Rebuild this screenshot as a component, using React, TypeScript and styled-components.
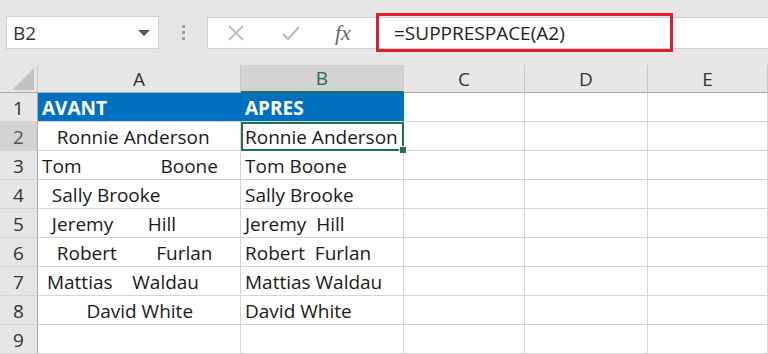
import React from 'react';
import styled, {createGlobalStyle} from 'styled-components';

const GlobalStyle = createGlobalStyle`
  html, body {
    margin: 0;
    padding: 0;
    background: #ffffff;
  }
  body {
    font-family: "Open Sans", "Noto Sans", sans-serif;
    overflow: hidden;
  }
`

const columns = ['A', 'B', 'C', 'D', 'E'];
const colWidths = [203, 163, 121, 123, 120];

const rows: string[][] = [
  ['AVANT', 'APRES'],
  ['   Ronnie Anderson', 'Ronnie Anderson'],
  ['Tom                Boone', 'Tom Boone'],
  ['  Sally Brooke', 'Sally Brooke'],
  ['  Jeremy       Hill', 'Jeremy  Hill'],
  ['   Robert        Furlan', 'Robert  Furlan'],
  [' Mattias    Waldau', 'Mattias Waldau'],
  ['         David White', 'David White'],
  ['', ''],
];

const App: React.FC = () => {
  return (
    <>
      <GlobalStyle/>
      <Page>
        <Toolbar>
          <NameBox>
            <NameText>B2</NameText>
            <DropArrow/>
          </NameBox>
          <Grip>
            <Dot/>
            <Dot/>
            <Dot/>
          </Grip>
          <FormulaBox>
            <IconSlot>
              <svg width="18" height="18" viewBox="0 0 18 18">
                <path d="M2 2 L16 16 M16 2 L2 16" stroke="#bdbdbd" strokeWidth="1.8" fill="none"/>
              </svg>
            </IconSlot>
            <IconSlot>
              <svg width="20" height="18" viewBox="0 0 20 18">
                <path d="M2 10 L7 15 L18 3" stroke="#bdbdbd" strokeWidth="2.2" fill="none"/>
              </svg>
            </IconSlot>
            <FxLabel>fx</FxLabel>
            <FormulaInput>=SUPPRESPACE(A2)</FormulaInput>
          </FormulaBox>
        </Toolbar>

        <Sheet>
          <Corner>
            <CornerTriangle/>
          </Corner>
          {columns.map((c) => (
            <ColHeader key={c} $selected={c === 'B'}>{c}</ColHeader>
          ))}
          <ColFiller/>

          {rows.map((r, ri) => (
            <React.Fragment key={ri}>
              <RowHeader $selected={ri === 1}>{ri + 1}</RowHeader>
              {columns.map((c, ci) => (
                <Cell
                  key={c}
                  $head={ri === 0 && ci < 2}
                  $active={ri === 1 && ci === 1}
                >
                  {r[ci] ?? ''}
                  {ri === 1 && ci === 1 && <FillHandle/>}
                </Cell>
              ))}
              <Cell $head={false} $active={false}/>
            </React.Fragment>
          ))}
        </Sheet>
      </Page>
    </>
  );
};

const Page = styled.div`
  width: 768px;
  height: 354px;
  overflow: hidden;
  background: #ffffff;
`

const Toolbar = styled.div`
  height: 65px;
  background: #e6e6e6;
  display: flex;
  align-items: center;
  padding-left: 6px;
  box-sizing: border-box;
`

const NameBox = styled.div`
  width: 153px;
  height: 33px;
  background: #ffffff;
  border: 1px solid #d0d0d0;
  box-sizing: border-box;
  display: flex;
  align-items: center;
  justify-content: space-between;
  padding: 0 8px 0 6px;
`

const NameText = styled.span`
  font-size: 19px;
  color: #333;
`

const DropArrow = styled.span`
  width: 0;
  height: 0;
  border-left: 6px solid transparent;
  border-right: 6px solid transparent;
  border-top: 6px solid #555;
`

const Grip = styled.div`
  width: 48px;
  display: flex;
  flex-direction: column;
  align-items: center;
  gap: 3px;
`

const Dot = styled.span`
  width: 3px;
  height: 3px;
  background: #a0a0a0;
`

const FormulaBox = styled.div`
  flex: 1;
  height: 32px;
  background: #ffffff;
  border: 1px solid #d0d0d0;
  border-right: none;
  box-sizing: border-box;
  display: flex;
  align-items: center;
`

const IconSlot = styled.div`
  width: 55px;
  display: flex;
  justify-content: center;
  align-items: center;
`

const FxLabel = styled.span`
  width: 58px;
  box-sizing: border-box;
  padding-left: 17px;
  font-family: "Liberation Serif", "DejaVu Serif", serif;
  font-style: italic;
  font-size: 22px;
  color: #666;
`

const FormulaInput = styled.div`
  height: 39px;
  width: 297px;
  border: 3px solid #d9202c;
  box-sizing: border-box;
  display: flex;
  align-items: center;
  padding-left: 15px;
  font-size: 19px;
  color: #222;
`

const Sheet = styled.div`
  display: grid;
  grid-template-columns: 38px ${colWidths.map(w => `${w}px`).join(' ')} 1fr;
  grid-template-rows: 28px repeat(9, 29px);
`

const Corner = styled.div`
  background: #e6e6e6;
  border-right: 1px solid #c8c8c8;
  border-bottom: 1px solid #ababab;
  box-sizing: border-box;
  position: relative;
`

const CornerTriangle = styled.div`
  position: absolute;
  right: 3px;
  bottom: 2px;
  width: 0;
  height: 0;
  border-left: 22px solid transparent;
  border-bottom: 22px solid #c2c2c2;
`

const ColHeader = styled.div<{ $selected: boolean }>`
  background: ${p => p.$selected ? '#d3d3d3' : '#e6e6e6'};
  border-right: 1px solid #c8c8c8;
  border-bottom: ${p => p.$selected ? '2px solid #217346' : '1px solid #ababab'};
  box-sizing: border-box;
  display: flex;
  align-items: center;
  justify-content: center;
  font-size: 19px;
  color: ${p => p.$selected ? '#2d6b48' : '#333'};
`

const ColFiller = styled.div`
  background: #e6e6e6;
  border-bottom: 1px solid #ababab;
`

const RowHeader = styled.div<{ $selected: boolean }>`
  background: ${p => p.$selected ? '#d3d3d3' : '#e6e6e6'};
  border-right: 1px solid #ababab;
  border-bottom: 1px solid #d4d4d4;
  box-sizing: border-box;
  display: flex;
  align-items: flex-end;
  justify-content: center;
  padding-bottom: 3px;
  line-height: 1;
  font-size: 19px;
  color: ${p => p.$selected ? '#555' : '#333'};
`

const Cell = styled.div<{ $head: boolean; $active: boolean }>`
  position: relative;
  box-sizing: border-box;
  background: ${p => p.$head ? '#0070c0' : '#ffffff'};
  border-right: 1px solid ${p => p.$head ? '#0070c0' : '#d4d4d4'};
  border-bottom: 1px solid #d4d4d4;
  display: flex;
  align-items: flex-end;
  padding: 0 0 3px 4px;
  line-height: 1;
  white-space: pre;
  overflow: visible;
  font-size: 19px;
  font-weight: ${p => p.$head ? 700 : 400};
  color: ${p => p.$head ? '#ffffff' : '#1a1a1a'};
  ${p => p.$active && `
    outline: 2px solid #217346;
    outline-offset: -2px;
    z-index: 1;
  `}
`

const FillHandle = styled.span`
  position: absolute;
  right: -4px;
  bottom: -4px;
  width: 6px;
  height: 6px;
  background: #217346;
  border: 1px solid #ffffff;
`

export default App;
